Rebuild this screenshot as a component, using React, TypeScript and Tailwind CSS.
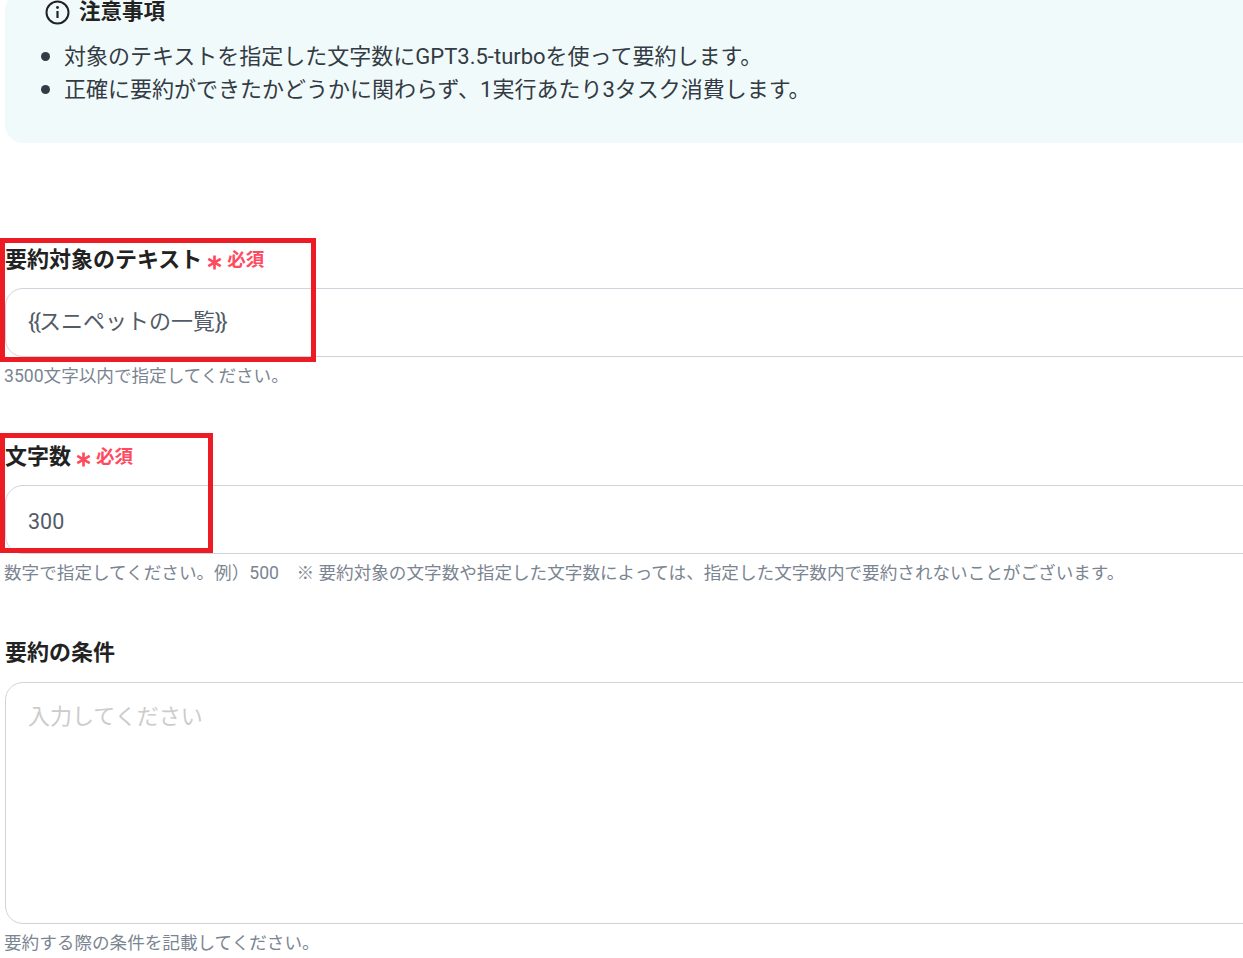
import React from 'react';

interface FieldLabelProps {
  text: string;
  required?: boolean;
}

function FieldLabel({ text, required }: FieldLabelProps) {
  return (
    <div className="flex h-[30px] items-center pt-[2px] text-[22px] leading-[28px] font-bold text-[#222222]">
      <span>{text}</span>
      {required && (
        <>
          <svg className="ml-[5px] mt-[5px] h-[15px] w-[15px] text-[#ff4a5f]" viewBox="0 0 14 14" fill="none" stroke="currentColor" strokeWidth="2.5">
            <path d="M7 0.5V13.5M1.2 3.6L12.8 10.4M12.8 3.6L1.2 10.4" />
          </svg>
          <span className="ml-[5px] text-[18.5px] text-[#ff4a5f]">必須</span>
        </>
      )}
    </div>
  );
}

function Hint({ children }: { children: React.ReactNode }) {
  return <div className="mt-[7px] -ml-[1px] h-[24px] text-[17.6px] leading-[24px] whitespace-pre text-[#7b8591]">{children}</div>;
}

function Bullet({ children }: { children: React.ReactNode }) {
  return (
    <li className="flex items-center">
      <span className="mr-[14px] h-[9px] w-[9px] rounded-full bg-[#333b44]" />
      <span>{children}</span>
    </li>
  );
}

export default function App() {
  return (
    <div className="relative h-[958px] w-[1243px] overflow-hidden bg-white pl-[5px] font-['Roboto','Noto_Sans_CJK_JP',sans-serif]">
      <div className="-mt-[8px] h-[151px] w-[1300px] rounded-[18px] bg-[#f1fafa] pl-[40px] pt-[4px]">
        <div className="flex h-[32px] items-center gap-[9px] text-[21.5px] font-bold text-[#222222]">
          <svg className="h-[25px] w-[25px]" viewBox="0 0 25 25" fill="none" stroke="currentColor">
            <circle cx="12.5" cy="12.5" r="11" strokeWidth="2" />
            <path d="M12.5 11V18" strokeWidth="2.2" />
            <circle cx="12.5" cy="7.5" r="1.4" fill="currentColor" stroke="none" />
          </svg>
          <span>注意事項</span>
        </div>
        <ul className="mt-[12px] -ml-[4px] text-[22px] leading-[33px] text-[#333b44]">
          <Bullet>対象のテキストを指定した文字数にGPT3.5-turboを使って要約します。</Bullet>
          <Bullet>正確に要約ができたかどうかに関わらず、1実行あたり3タスク消費します。</Bullet>
        </ul>
      </div>

      <div className="mt-[101px]">
        <FieldLabel text="要約対象のテキスト" required />
        <div className="mt-[14px] flex h-[69px] w-[1300px] items-center rounded-[18px] border border-[#cfd4dc] bg-white px-[22px] pb-[2px] text-[22px] text-[#525b66]">
          <span className="tracking-[-2px]">{'{{'}</span>
          <span>スニペットの一覧</span>
          <span className="tracking-[-2px]">{'}}'}</span>
        </div>
        <Hint>3500文字以内で指定してください。</Hint>
      </div>

      <div className="mt-[53px]">
        <FieldLabel text="文字数" required />
        <input
          readOnly
          value="300"
          className="mt-[14px] block h-[69px] w-[1300px] rounded-[18px] border border-[#cfd4dc] bg-white px-[22px] pt-[3px] text-[21.5px] text-[#525b66] outline-none"
        />
        <Hint>数字で指定してください。例）500　※ 要約対象の文字数や指定した文字数によっては、指定した文字数内で要約されないことがございます。</Hint>
      </div>

      <div className="mt-[52px]">
        <FieldLabel text="要約の条件" />
        <textarea
          readOnly
          placeholder="入力してください"
          className="mt-[15px] block h-[242px] w-[1300px] resize-none rounded-[18px] border border-[#cfd4dc] bg-white px-[22px] py-[17px] text-[22px] leading-[33px] outline-none placeholder:text-[#cccccc]"
        />
        <Hint>要約する際の条件を記載してください。</Hint>
      </div>

      {/* annotation boxes drawn over the capture */}
      <div className="absolute left-0 top-[238px] h-[124px] w-[316px] border-[5px] border-[#ed1c24]" />
      <div className="absolute left-0 top-[433px] h-[120px] w-[213px] border-[5px] border-[#ed1c24]" />
    </div>
  );
}
